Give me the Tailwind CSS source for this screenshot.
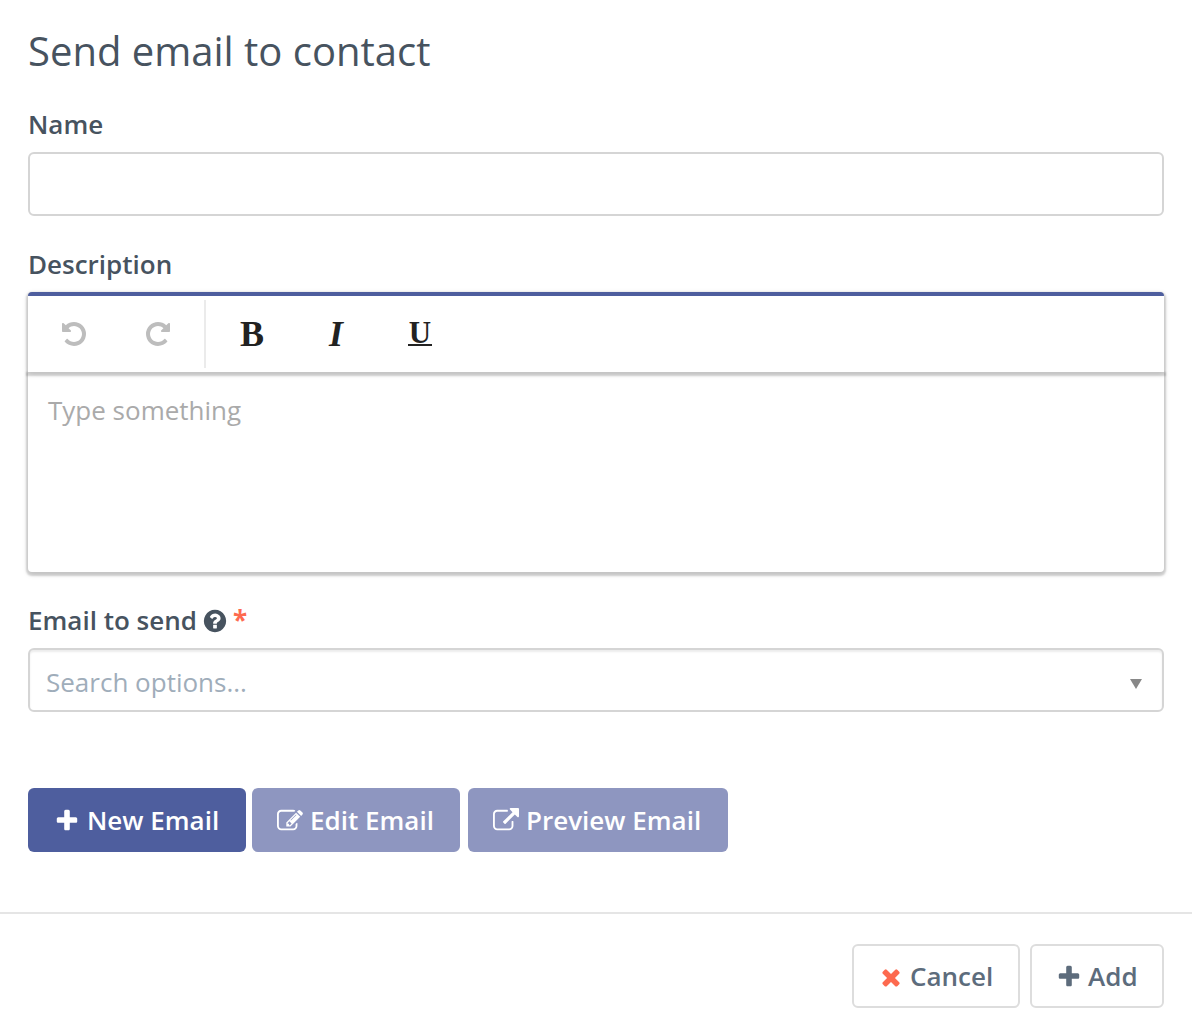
<!DOCTYPE html>
<html lang="en">
<head>
    <meta charset="UTF-8">
    <meta name="viewport" content="width=device-width, initial-scale=1.0">
    <title>Send email to contact</title>
    <script src="https://cdn.jsdelivr.net/npm/@tailwindcss/browser@4"></script>
</head>
<body class="bg-white font-['Open_Sans',sans-serif] text-[26px] leading-9 text-[#47535f]">
    <!-- Form -->
    <form class="px-7 pt-[23px] h-[912px]">
        <h1 class="text-[40px] leading-[56px]">Send email to contact</h1>

        <!-- Name -->
        <div class="mt-[27px]">
            <label for="name" class="block font-semibold">Name</label>
            <input id="name" type="text" class="block mt-2.5 h-16 w-full rounded-md border-2 border-[#d5d5d5] px-4 outline-none">
        </div>

        <!-- Description -->
        <div class="mt-[30px]">
            <label class="block font-semibold">Description</label>
            <div class="mt-2.5">
                <div class="relative z-10 flex h-20 items-center rounded-t-[4px] border-t-4 border-[#4e5e9e] bg-white font-['Liberation_Serif',serif] text-[#222] shadow-[0_2px_6px_rgba(0,0,0,0.12),0_2px_2px_2px_rgba(0,0,0,0.16)]">
                    <button type="button" class="flex w-[92px] justify-center text-[#bdbdbd]">
                        <svg class="size-7" viewBox="0 0 1792 1792" fill="currentColor"><path d="M1664 896q0 156-61 298t-164 245-245 164-298 61q-172 0-327-72.5t-264-204.5q-7-10-6.5-22.5t8.5-20.5l137-138q10-9 25-9 16 2 23 12 73 95 179 147t225 52q104 0 198.5-40.5t163.5-109.5 109.5-163.5 40.5-198.5-40.5-198.5-109.5-163.5-163.5-109.5-198.5-40.5q-98 0-188 35.5t-160 101.5l137 138q31 30 14 69-17 40-59 40h-448q-26 0-45-19t-19-45v-448q0-42 40-59 39-17 69 14l130 129q107-101 244.5-156.5t284.5-55.5q156 0 298 61t245 164 164 245 61 298z"/></svg>
                    </button>
                    <button type="button" class="flex w-[76px] justify-center text-[#bdbdbd]">
                        <svg class="size-7 -scale-x-100" viewBox="0 0 1792 1792" fill="currentColor"><path d="M1664 896q0 156-61 298t-164 245-245 164-298 61q-172 0-327-72.5t-264-204.5q-7-10-6.5-22.5t8.5-20.5l137-138q10-9 25-9 16 2 23 12 73 95 179 147t225 52q104 0 198.5-40.5t163.5-109.5 109.5-163.5 40.5-198.5-40.5-198.5-109.5-163.5-163.5-109.5-198.5-40.5q-98 0-188 35.5t-160 101.5l137 138q31 30 14 69-17 40-59 40h-448q-26 0-45-19t-19-45v-448q0-42 40-59 39-17 69 14l130 129q107-101 244.5-156.5t284.5-55.5q156 0 298 61t245 164 164 245 61 298z"/></svg>
                    </button>
                    <span class="ml-2 h-[68px] w-0.5 bg-[#ebebeb]"></span>
                    <button type="button" class="ml-1 w-[84px] text-[36px] font-bold">B</button>
                    <button type="button" class="w-[84px] text-[36px] font-bold italic">I</button>
                    <button type="button" class="flex w-[84px] justify-center">
                        <span class="flex h-6 w-6 justify-center border-b-2 border-[#222] text-[31px] leading-[21px] font-bold">U</span>
                    </button>
                </div>
                <div class="h-[200px] rounded-b-[4px] bg-white px-5 py-5 text-[#aaa] shadow-[0_2px_6px_rgba(0,0,0,0.12),0_2px_2px_2px_rgba(0,0,0,0.16)]">Type something</div>
            </div>
        </div>

        <!-- Email to send -->
        <div class="mt-[30px]">
            <label class="flex items-center font-semibold">
                Email to send
                <svg class="ml-[5px] mt-0.5 size-[26px]" viewBox="0 0 1792 1792" fill="currentColor"><path d="M1024 1376v-192q0-14-9-23t-23-9h-192q-14 0-23 9t-9 23v192q0 14 9 23t23 9h192q14 0 23-9t9-23zm256-672q0-88-55.5-163t-138.5-116-170-41q-243 0-371 213-15 24 8 42l132 100q7 6 19 6 16 0 25-12 53-68 86-92 34-24 86-24 48 0 85.5 26t37.5 59q0 38-20 61t-68 45q-63 28-115.5 86.5t-52.5 125.5v36q0 14 9 23t23 9h192q14 0 23-9t9-23q0-19 21.5-49.5t54.5-49.5q32-18 49-28.5t46-35 44.5-48 28-60.5 12.5-81zm384 192q0 209-103 385.5t-279.5 279.5-385.5 103-385.5-103-279.5-279.5-103-385.5 103-385.5 279.5-279.5 385.5-103 385.5 103 279.5 279.5 103 385.5z"/></svg>
                <span class="ml-[5px] font-bold text-[#fd6a4f]">*</span>
            </label>
            <div class="mt-2.5 flex h-16 items-center justify-between rounded-md border-2 border-[#d5d5d5] pr-5 pl-4 shadow-[inset_0_2px_2px_rgba(0,0,0,0.075)]">
                <span class="pt-1 text-[#9fadba]">Search options...</span>
                <svg class="mt-2 h-2.5 w-3" viewBox="0 0 12 10" fill="#888"><path d="M0 0h12L6 10z"/></svg>
            </div>
        </div>

        <!-- Email actions -->
        <div class="mt-[76px] flex font-semibold text-white">
            <button type="button" class="flex h-16 w-[218px] items-center rounded-md bg-[#4e5e9e] pl-[26px]">
                <svg class="mt-0.5 size-[26px]" viewBox="0 0 1792 1792" fill="currentColor"><path d="M1600 736v192q0 40-28 68t-68 28h-416v416q0 40-28 68t-68 28h-192q-40 0-68-28t-28-68v-416h-416q-40 0-68-28t-28-68v-192q0-40 28-68t68-28h416v-416q0-40 28-68t68-28h192q40 0 68 28t28 68v416h416q40 0 68 28t28 68z"/></svg>
                <span class="ml-[7px]">New Email</span>
            </button>
            <button type="button" class="ml-1.5 flex h-16 w-[208px] items-center rounded-md bg-[#8e96c0] pl-[25px]">
                <svg class="mt-0.5 size-[26px]" viewBox="0 0 1792 1792" fill="currentColor"><path d="M888 1184l116-116-152-152-116 116v56h96v96h56zm440-720q-16-16-33 1l-350 350q-17 17-1 33t33-1l350-350q17-17 1-33zm80 594v190q0 119-84.5 203.5t-203.5 84.5h-832q-119 0-203.5-84.5t-84.5-203.5v-832q0-119 84.5-203.5t203.5-84.5h832q63 0 117 25 15 7 18 23 3 17-9 29l-49 49q-14 14-32 8-23-6-45-6h-832q-66 0-113 47t-47 113v832q0 66 47 113t113 47h832q66 0 113-47t47-113v-126q0-13 9-22l64-64q15-15 35-7t20 29zm-96-738l288 288-672 672h-288v-288zm444 132l-92 92-288-288 92-92q28-28 68-28t68 28l152 152q28 28 28 68t-28 68z"/></svg>
                <span class="ml-[7px]">Edit Email</span>
            </button>
            <button type="button" class="ml-2 flex h-16 w-[260px] items-center rounded-md bg-[#8e96c0] pl-[25px]">
                <svg class="mt-0.5 size-[26px]" viewBox="0 0 1792 1792" fill="currentColor"><path d="M1408 928v320q0 119-84.5 203.5t-203.5 84.5h-832q-119 0-203.5-84.5t-84.5-203.5v-832q0-119 84.5-203.5t203.5-84.5h704q14 0 23 9t9 23v64q0 14-9 23t-23 9h-704q-66 0-113 47t-47 113v832q0 66 47 113t113 47h832q66 0 113-47t47-113v-320q0-14 9-23t23-9h64q14 0 23 9t9 23zm384-864v512q0 26-19 45t-45 19-45-19l-176-176-652 652q-10 10-23 10t-23-10l-114-114q-10-10-10-23t10-23l652-652-176-176q-19-19-19-45t19-45 45-19h512q26 0 45 19t19 45z"/></svg>
                <span class="ml-[7px]">Preview Email</span>
            </button>
        </div>
    </form>

    <!-- Footer -->
    <div class="flex h-[124px] justify-end gap-2.5 border-t-2 border-[#e5e5e5] px-7 pt-[30px] font-semibold text-[#5d6c7c]">
        <button type="button" class="flex h-16 w-[168px] items-center rounded-md border-2 border-[#ddd] pl-6">
            <svg class="mt-0.5 size-[26px] text-[#fd6a4f]" viewBox="0 0 1792 1792" fill="currentColor"><path d="M1490 1322q0 40-28 68l-136 136q-28 28-68 28t-68-28l-294-294-294 294q-28 28-68 28t-68-28l-136-136q-28-28-28-68t28-68l294-294-294-294q-28-28-28-68t28-68l136-136q28-28 68-28t68 28l294 294 294-294q28-28 68-28t68 28l136 136q28 28 28 68t-28 68l-294 294 294 294q28 28 28 68z"/></svg>
            <span class="ml-1.5">Cancel</span>
        </button>
        <button type="button" class="flex h-16 w-[134px] items-center rounded-md border-2 border-[#ddd] pl-6">
            <svg class="mt-0.5 size-[26px]" viewBox="0 0 1792 1792" fill="currentColor"><path d="M1600 736v192q0 40-28 68t-68 28h-416v416q0 40-28 68t-68 28h-192q-40 0-68-28t-28-68v-416h-416q-40 0-68-28t-28-68v-192q0-40 28-68t68-28h416v-416q0-40 28-68t68-28h192q40 0 68 28t28 68v416h416q40 0 68 28t28 68z"/></svg>
            <span class="ml-1.5">Add</span>
        </button>
    </div>
</body>
</html>
